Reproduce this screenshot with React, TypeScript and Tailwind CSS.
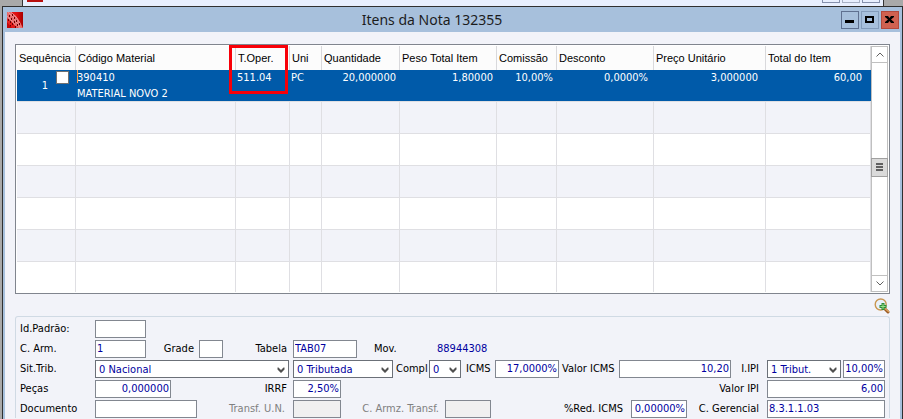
import React from 'react';
import { clsx } from 'clsx';

interface Item {
  sequencia: number;
  codigo: string;
  material: string;
  operacao: string;
  unidade: string;
  quantidade: string;
  peso: string;
  comissao: string;
  desconto: string;
  preco: string;
  total: string;
}

const columns = [
  { label: 'Sequência', width: 'w-[59px]' },
  { label: 'Código Material', width: '' },
  { label: 'T.Oper.', width: 'w-[54px]' },
  { label: 'Uni', width: 'w-8' },
  { label: 'Quantidade', width: 'w-[78px]' },
  { label: 'Peso Total Item', width: 'w-[97px]' },
  { label: 'Comissão', width: 'w-[60px]' },
  { label: 'Desconto', width: 'w-[97px]' },
  { label: 'Preço Unitário', width: 'w-28' },
  { label: 'Total do Item', width: 'w-[105px]' },
];

const items: Item[] = [
  {
    sequencia: 1,
    codigo: '390410',
    material: 'MATERIAL NOVO 2',
    operacao: '511.04',
    unidade: 'PC',
    quantidade: '20,000000',
    peso: '1,80000',
    comissao: '10,00%',
    desconto: '0,0000%',
    preco: '3,000000',
    total: '60,00',
  },
];

const emptyRows = [0, 1, 2, 3, 4, 5];

const Logo: React.FC = () => (
  <svg className="h-4 w-4 shrink-0" viewBox="0 0 16 16" aria-hidden="true">
    <defs>
      <linearGradient id="logo-red" x1="0" y1="0" x2="1" y2="0">
        <stop offset="0" stopColor="#e82a2a" />
        <stop offset="0.6" stopColor="#e00d0d" />
        <stop offset="1" stopColor="#a80000" />
      </linearGradient>
    </defs>
    <rect width="16" height="16" fill="url(#logo-red)" />
    <path d="M0 0h4l5 4 4 6 3 6h-5L6 11 0 6z" fill="#e86a6a" />
    <path d="M1 0l6 6 6 10M4 0l6 6 3 6M0 4l5 5 5 7" stroke="#f7b4b4" strokeWidth="0.5" fill="none" />
    <path
      d="M2 3h1v2h-1zM5 2h1v2h-1zM4 6h1v2h-1zM7 5h1v2h-1zM7 9h1v2h-1zM9 8h1v2h-1zM10 12h1v2h-1zM12 11h1v2h-1zM3 9h1v2h-1zM5 11h1v2h-1zM1 7h1v2h-1zM8 14h1v2h-1zM3 13h1v2h-1z"
      fill="#6a0000"
    />
    <path d="M0 10l5 6H0z" fill="#c40808" />
  </svg>
);

const Chevron: React.FC = () => (
  <svg
    className="pointer-events-none absolute right-1 top-[7px] h-[7px] w-2"
    viewBox="0 0 8 7"
    aria-hidden="true"
  >
    <path d="M0.500 0.500h1L4 3l2.500-2.500h1v2L4 6 0.500 2.500z" fill="#505050" />
  </svg>
);

interface FieldProps {
  id: string;
  label: string;
  width: string;
  value?: string;
  labelClass?: string;
  right?: boolean;
  disabled?: boolean;
}

const Field: React.FC<FieldProps> = ({ id, label, width, value = '', labelClass, right, disabled }) => (
  <>
    <label htmlFor={id} className={clsx('shrink-0 whitespace-nowrap', disabled && 'text-[#808080]', labelClass)}>
      {label}
    </label>
    <input
      id={id}
      defaultValue={value}
      disabled={disabled}
      className={clsx(
        'h-[18px] min-w-0 border border-[#828790] px-px text-[#0000a0] outline-none',
        disabled ? 'bg-[#f0f0f0]' : 'bg-white',
        right && 'text-right',
        width
      )}
    />
  </>
);

interface DropdownProps {
  id: string;
  label: string;
  value: string;
  width: string;
  hiddenLabel?: boolean;
  labelClass?: string;
}

const Dropdown: React.FC<DropdownProps> = ({ id, label, value, width, hiddenLabel, labelClass }) => (
  <>
    {!hiddenLabel && (
      <label htmlFor={id} className={clsx('shrink-0 whitespace-nowrap', labelClass)}>
        {label}
      </label>
    )}
    <div className={clsx('relative shrink-0', width)}>
      <select
        id={id}
        aria-label={hiddenLabel ? label : undefined}
        className="block h-[18px] w-full appearance-none border border-[#6b7078] bg-white pl-[3px] text-[#0000a0] outline-none"
      >
        <option>{value}</option>
      </select>
      <Chevron />
    </div>
  </>
);

const TitleBar: React.FC = () => (
  <header className="flex h-[25px] items-center pl-[2px] pr-px">
    <Logo />
    <h1 className="flex-1 text-center font-['Noto_Sans','Open_Sans',sans-serif] text-[14px] text-[#1c1c1c]">
      Itens da Nota 132355
    </h1>
    <div className="flex gap-[2px]">
      <button
        aria-label="Minimizar"
        className="flex h-[18px] w-[18px] items-center justify-center border border-[#5f7190]"
      >
        <svg className="h-4 w-4" viewBox="0 0 16 16">
          <path d="M3 8h9v3H3z" fill="#000" />
        </svg>
      </button>
      <button
        aria-label="Maximizar"
        className="flex h-[18px] w-[18px] items-center justify-center border border-[#849cba]"
      >
        <svg className="h-4 w-4" viewBox="0 0 16 16">
          <path d="M3 4h9v7H3zM5 6v3h5V6z" fill="#000" fillRule="evenodd" />
        </svg>
      </button>
      <button
        aria-label="Fechar"
        className="flex h-[18px] w-[18px] items-center justify-center border border-[#b3483b] bg-[#cf6150]"
      >
        <svg className="h-4 w-4" viewBox="0 0 16 16">
          <path d="M3 4h3l1.500 2L9 4h3v1L9 7.500l3 2.500v1H9L7.500 9 6 11H3v-1l3-2.500L3 5z" fill="#000" />
        </svg>
      </button>
    </div>
  </header>
);

const ScrollBar: React.FC = () => (
  <div className="flex w-[17px] shrink-0 flex-col border-x border-[#c0c0c0] bg-white">
    <button aria-label="Rolar para cima" className="flex h-[17px] items-center justify-center border-y border-[#c0c0c0]">
      <svg className="h-[5px] w-2" viewBox="0 0 8 5">
        <path d="M0.500 4.500L4 1l3.500 3.500" fill="none" stroke="#606060" />
      </svg>
    </button>
    <div className="flex flex-1 flex-col justify-center pb-1">
      <div className="-mx-px flex h-[19px] flex-col items-center justify-center gap-px border border-[#a0a0a0] bg-[#dadada]">
        <span className="h-[2px] w-[7px] bg-[#606060]" />
        <span className="h-[2px] w-[7px] bg-[#606060]" />
        <span className="h-[2px] w-[7px] bg-[#606060]" />
      </div>
    </div>
    <button aria-label="Rolar para baixo" className="flex h-[17px] items-center justify-center border-y border-[#c0c0c0]">
      <svg className="h-[5px] w-2" viewBox="0 0 8 5">
        <path d="M0.500 0.500L4 4l3.500-3.500" fill="none" stroke="#606060" />
      </svg>
    </button>
  </div>
);

const ItemsGrid: React.FC = () => (
  <div className="flex border border-[#80858e] bg-white p-px">
    <table className="min-w-0 flex-1 table-fixed border-separate border-spacing-0">
      <thead>
        <tr className="h-6">
          {columns.map((column) => (
            <th
              key={column.label}
              className={clsx(
                "relative whitespace-nowrap border-r border-[#d9d9dc] bg-[#fcfcfc] p-0 pl-[2px] text-left align-middle font-['Liberation_Sans',Arial,sans-serif] font-normal text-black",
                column.width
              )}
            >
              {column.label}
              {column.label === 'T.Oper.' && (
                <span className="pointer-events-none absolute -left-[7px] -top-px z-10 h-[49px] w-[59px] border-[3px] border-[#f80008]" />
              )}
            </th>
          ))}
        </tr>
      </thead>
      <tbody>
        {items.map((item) => (
          <tr key={item.sequencia} className="h-[31px] bg-[#005aa9] align-top leading-4 text-white">
            <td className="p-0">
              <div className="flex justify-end gap-2 pr-[7px]">
                <span className="pt-2 leading-[15px]">{item.sequencia}</span>
                <input
                  type="checkbox"
                  aria-label="Selecionar item"
                  className="mt-px h-[13px] w-[13px] appearance-none border border-[#707070] bg-white"
                />
              </div>
            </td>
            <td className="p-0">
              <div className="relative pl-px">
                <span className="absolute left-px top-0 h-[13px] w-px bg-[#ff9a45]" />
                <div>{item.codigo}</div>
                <div className="h-[15px]">{item.material}</div>
              </div>
            </td>
            <td className="p-0 pl-px">{item.operacao}</td>
            <td className="p-0 pl-px">{item.unidade}</td>
            <td className="p-0 pr-1 text-right">{item.quantidade}</td>
            <td className="p-0 pr-1 text-right">{item.peso}</td>
            <td className="p-0 pr-1 text-right">{item.comissao}</td>
            <td className="p-0 pr-[6px] text-right">{item.desconto}</td>
            <td className="p-0 pr-2 text-right">{item.preco}</td>
            <td className="p-0 pr-[9px] text-right">{item.total}</td>
          </tr>
        ))}
        {emptyRows.map((row) => (
          <tr key={row} className={clsx('h-8 last:h-[31px]', row % 2 === 0 ? 'bg-[#f2f3f9]' : 'bg-white')}>
            {columns.map((column) => (
              <td key={column.label} className="border-r border-t border-[#dfdfe3] p-0" />
            ))}
          </tr>
        ))}
      </tbody>
    </table>
    <ScrollBar />
  </div>
);

const SearchIcon: React.FC = () => (
  <svg className="block h-4 w-4" viewBox="0 0 16 16" aria-hidden="true">
    <path d="M11 11l3 3" stroke="#9a5a24" strokeWidth="3" strokeLinecap="round" />
    <path d="M11 10.500l3.500 3" stroke="#dca25e" strokeWidth="1.400" strokeLinecap="round" />
    <circle cx="6.700" cy="6.500" r="5.500" fill="#e9f1fa" stroke="#c99650" strokeWidth="1.400" />
    <path d="M7.500 5h3v2h2v3h-2v2h-3v-2h-2V7h2z" fill="#2f8d37" />
    <path d="M8.500 6h1v2h2v1h-2v2h-1V9h-2V8h2z" fill="#9be08c" />
  </svg>
);

const ItemForm: React.FC = () => (
  <form className="flex flex-col gap-[2px] rounded-t-[3px] border border-b-0 border-[#d0dae4] px-1 pt-[3px] leading-[18px] text-black">
    <div className="flex">
      <Field id="padrao" label="Id.Padrão:" labelClass="w-[75px]" width="w-[51px]" />
    </div>
    <div className="flex">
      <Field id="armazem" label="C. Arm." labelClass="w-[75px]" width="w-[51px]" value="1" />
      <Field id="grade" label="Grade" labelClass="w-[53px] pr-[5px] text-right" width="w-6" />
      <Field id="tabela" label="Tabela" labelClass="w-[70px] pr-[6px] text-right" width="w-16" value="TAB07" />
      <span className="w-20 pl-[17px]">Mov.</span>
      <output className="text-[#0000a0]">88944308</output>
    </div>
    <div className="flex">
      <Dropdown id="sit-trib" label="Sit.Trib." labelClass="w-[75px]" width="w-[194px]" value="0 Nacional" />
      <Dropdown id="tributacao" label="Tributação" hiddenLabel width="ml-1 w-[100px]" value="0 Tributada" />
      <Dropdown id="compl" label="Compl" labelClass="w-9 pl-[3px]" width="w-8" value="0" />
      <Field id="icms" label="ICMS" labelClass="w-[34px] pl-[5px]" width="w-16 shrink-0" value="17,0000%" right />
      <Field id="valor-icms" label="Valor ICMS" labelClass="w-[60px] pl-[3px]" width="flex-1" value="10,20" right />
      <Dropdown id="ipi" label="I.IPI" labelClass="w-9 pr-2 text-right" width="w-[74px]" value="1 Tribut." />
      <input
        aria-label="Alíquota IPI"
        defaultValue="10,00%"
        className="ml-[2px] h-[18px] w-[42px] shrink-0 border border-[#828790] bg-white px-px text-right text-[#0000a0] outline-none"
      />
    </div>
    <div className="flex">
      <Field id="pecas" label="Peças" labelClass="w-[75px]" width="w-[76px]" value="0,000000" right />
      <Field id="irrf" label="IRRF" labelClass="w-[122px] pr-[6px] text-right" width="w-12" value="2,50%" right />
      <Field id="valor-ipi" label="Valor IPI" labelClass="ml-auto pr-2" width="w-[118px]" value="6,00" right />
    </div>
    <div className="flex">
      <Field id="documento" label="Documento" labelClass="w-[75px]" width="w-[102px]" />
      <Field id="transf-un" label="Transf. U.N." labelClass="w-24 pr-2 text-right" width="w-12" disabled />
      <Field id="armz-transf" label="C. Armz. Transf." labelClass="w-[104px] pr-[6px] text-right" width="w-[46px]" disabled />
      <Field id="red-icms" label="%Red. ICMS" labelClass="ml-auto pr-2" width="w-14" value="0,00000%" right />
      <Field id="gerencial" label="C. Gerencial" labelClass="w-20 pr-2 text-right" width="w-[118px]" value="8.3.1.1.03" />
    </div>
  </form>
);

const App: React.FC = () => {
  return (
    <div className="flex min-h-screen flex-col bg-[#a9a9a9] pl-[2px] font-['DejaVu_Sans_Condensed','DejaVu_Sans',sans-serif] text-[11px]">
      {/* Bottom edge of the window behind */}
      <div className="ml-5 mr-[19px] flex h-[6px] items-start justify-between border-x border-[#343434] bg-[#e8effe] pl-1 pr-[3px]">
        <div className="h-[2px] w-4 bg-[#b80f0f]" />
        <div className="flex gap-[2px]">
          <div className="h-[3px] w-[18px] border border-t-0 border-[#8590ac]" />
          <div className="h-[3px] w-[18px] border border-t-0 border-[#a7b0c4]" />
          <div className="h-[3px] w-[18px] border border-t-0 border-[#8590ac]" />
        </div>
      </div>
      <div className="flex flex-1 flex-col border-x border-t border-[#303030] bg-[#a7c0dc] px-[2px]">
        <TitleBar />
        <main className="flex-1 bg-[#f2f3f9] px-[10px] pt-3">
          <ItemsGrid />
          <div className="flex h-[22px] items-start justify-end pt-1">
            <button aria-label="Pesquisar item">
              <SearchIcon />
            </button>
          </div>
          <ItemForm />
        </main>
      </div>
    </div>
  );
};

export default App;
